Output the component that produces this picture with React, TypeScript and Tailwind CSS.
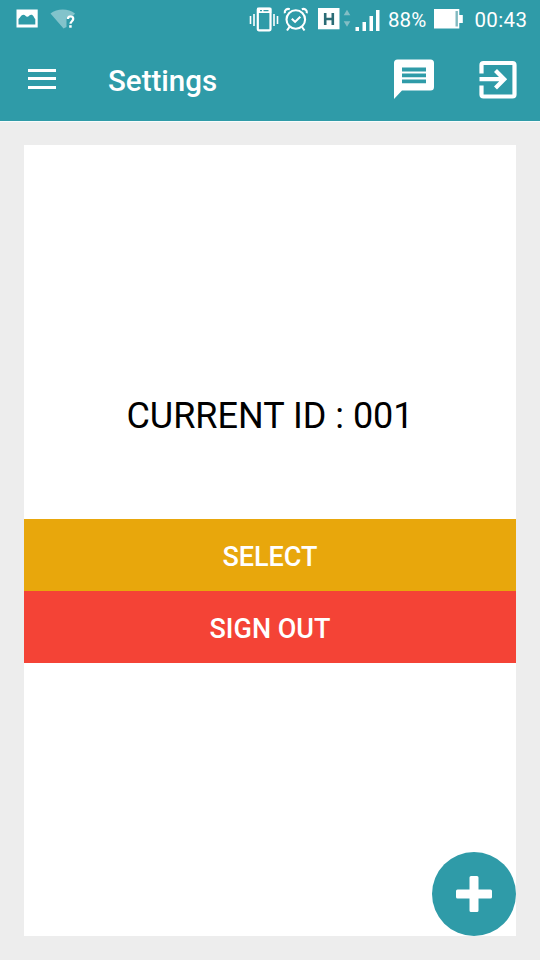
import React from "react";

const font = "font-[Roboto,'Noto_Sans',sans-serif]";

function StatusBar() {
  return (
    <div className="flex h-9 items-start text-white">
      <svg className="ml-4 h-9 w-[23px] shrink-0" viewBox="16 0 23 36">
        <path fill="currentColor" fillRule="evenodd" d="M16.500 9.500h21.200v18H16.500zM18.500 24.500h16.800V19c-1.500-1.500-2-4.300-4-4.300s-2.500 2-4 2-2-2-4-2-3.300 3.300-4.800 4.300z" />
      </svg>
      <svg className="ml-[11px] h-9 w-[27px] shrink-0" viewBox="50 0 27 36">
        <path fill="#82c3cb" d="M50.500 13.500C57 8 68.500 8 75 13.500L73.500 15.500c-3-1-7 .5-7 4v7.500l-3 1.500z" />
        <path fill="none" stroke="currentColor" strokeWidth="2.300" d="M67.900 19c.2-3.400 5.300-3.400 5.300 0 0 2.200-2.700 2.300-2.700 4.800" />
        <path fill="currentColor" d="M69.200 25.200h2.500v2.500h-2.500z" />
      </svg>
      <svg className="ml-[172px] h-9 w-[30px] shrink-0" viewBox="249 0 30 36">
        <rect x="257.800" y="8.600" width="12.700" height="21.700" rx="1" fill="none" stroke="currentColor" strokeWidth="2.200" />
        <path fill="currentColor" d="M257 7.800h14.300v5.200H257z" />
        <path stroke="#2f9ba8" strokeWidth="1.200" d="M260 10.700h2m1.500 0h5" />
        <path stroke="currentColor" strokeWidth="1.600" d="M250.500 16v8m3.500-10v12m20-12v12m3.500-10v8" />
      </svg>
      <svg className="ml-[4px] h-9 w-[26px] shrink-0" viewBox="283 0 26 36" fill="none" stroke="currentColor" strokeWidth="2.100">
        <circle cx="295.800" cy="19.500" r="9.300" />
        <path d="m291.800 18.700 3.300 3.200 5.200-5.200M289.500 27l-2.500 3.500m15-3.500 2.500 3.500" />
        <path d="M284.800 13.200c-.6-3 2.200-5 5-4m12 0c2.800-1 5.600 1 5 4" />
      </svg>
      <svg className="ml-[8px] h-9 w-[24px] shrink-0" viewBox="317 0 24 36">
        <path fill="currentColor" d="M318 8h21.500v21.300H318z" />
        <path fill="none" stroke="#2b6c76" strokeWidth="2.600" d="M325.200 13v12m7.600-12v12m-7.600-6h7.600" />
      </svg>
      <svg className="ml-[2px] h-9 w-[8px] shrink-0" viewBox="343 0 8 36">
        <path fill="#83bec5" d="m347 9.700 3.300 5.500h-6.600zm0 17.100-3.300-5.500h6.600z" />
      </svg>
      <svg className="ml-[4px] h-9 w-[25px] shrink-0" viewBox="355 0 25 36">
        <path fill="currentColor" d="M355.500 27h3.500v4h-3.500zm7-5h3.500v9h-3.500zm7-6h3.500v15h-3.500zm6.500-6h3.500v21h-3.500z" />
      </svg>
      <span className="ml-[8px] mt-[6px] w-[46px] whitespace-nowrap text-[20.5px] leading-7 tracking-[0.1px]">88%</span>
      <svg className="h-9 w-[30px] shrink-0" viewBox="434 0 30 36">
        <path fill="currentColor" d="M434 9h25.300v6h3.500v8h-3.500v5.500H434z" />
        <path fill="#81b9c0" d="M455.500 11h2.400v15.500h-2.400z" />
      </svg>
      <span className="ml-[10.500px] mt-[6px] whitespace-nowrap text-[20.500px] leading-7 tracking-[0.35px]">00:43</span>
    </div>
  );
}

function Toolbar() {
  return (
    <div className="flex h-[85px] items-start text-white">
      <button aria-label="Menu" className="ml-7 mt-[33px] flex w-7 flex-col gap-[5.300px]">
        <span className="h-[3px] w-full bg-white" />
        <span className="h-[3px] w-full bg-white" />
        <span className="h-[3px] w-full bg-white" />
      </button>
      <h1 className="ml-[52px] mt-[25px] grow text-[29.500px] font-medium leading-10">Settings</h1>
      <button aria-label="Messages" className="mt-[22px]">
        <svg className="h-[42px] w-[42px]" viewBox="0 0 42 42">
          <path fill="currentColor" d="M4.500 1.500h33a3.500 3.500 0 0 1 3.500 3.500v24a3.500 3.500 0 0 1-3.500 3.500H9L1 41V5a3.500 3.500 0 0 1 3.500-3.500z" />
          <path stroke="#2f9ba8" strokeWidth="3.800" d="M9 11.500h24M9 17.400h24M9 23.300h24" />
        </svg>
      </button>
      <button aria-label="Exit" className="ml-[43px] mr-[22px] mt-[24px]">
        <svg className="h-10 w-10" viewBox="478 60 40 40" fill="none" stroke="currentColor" strokeWidth="4.200">
          <path d="M481.500 73.500v-8.500q0-2 2-2h29q2 0 2 2v29.500q0 2-2 2h-29q-2 0-2-2v-9M479.500 79.200H504M495.500 70.500l8.700 8.700-8.700 8.700" />
        </svg>
      </button>
    </div>
  );
}

export default function App() {
  return (
    <div className={`relative flex h-[960px] w-[540px] flex-col overflow-hidden bg-[#ededed] ${font}`}>
      <header className="h-[121px] shrink-0 bg-[#2f9ba8]">
        <StatusBar />
        <Toolbar />
      </header>
      <div className="h-px shrink-0 bg-[#f8fcfc]" />
      <main className="mx-6 mb-6 mt-[23px] flex grow flex-col bg-white">
        <p className="mt-[251px] text-center text-[36px] leading-10 text-black">CURRENT ID : 001</p>
        <button className="mt-[83px] h-[72px] bg-[#e8a70c] pt-1 text-[27px] font-medium text-white">SELECT</button>
        <button className="h-[72px] bg-[#f44336] pt-1 text-[27px] font-medium text-white">SIGN OUT</button>
      </main>
      <button aria-label="Add" className="absolute bottom-6 right-6 flex h-[84px] w-[84px] items-center justify-center rounded-full bg-[#2f9ba8]">
        <svg className="h-9 w-9" viewBox="0 0 36 36">
          <path fill="white" d="M15 0h6q1.500 0 1.500 1.500v12h12q1.500 0 1.500 1.500v6q0 1.500-1.500 1.500h-12v12q0 1.500-1.500 1.500h-6q-1.500 0-1.500-1.500v-12h-12Q0 22.500 0 21v-6q0-1.500 1.500-1.500h12v-12Q13.500 0 15 0z" />
        </svg>
      </button>
    </div>
  );
}
